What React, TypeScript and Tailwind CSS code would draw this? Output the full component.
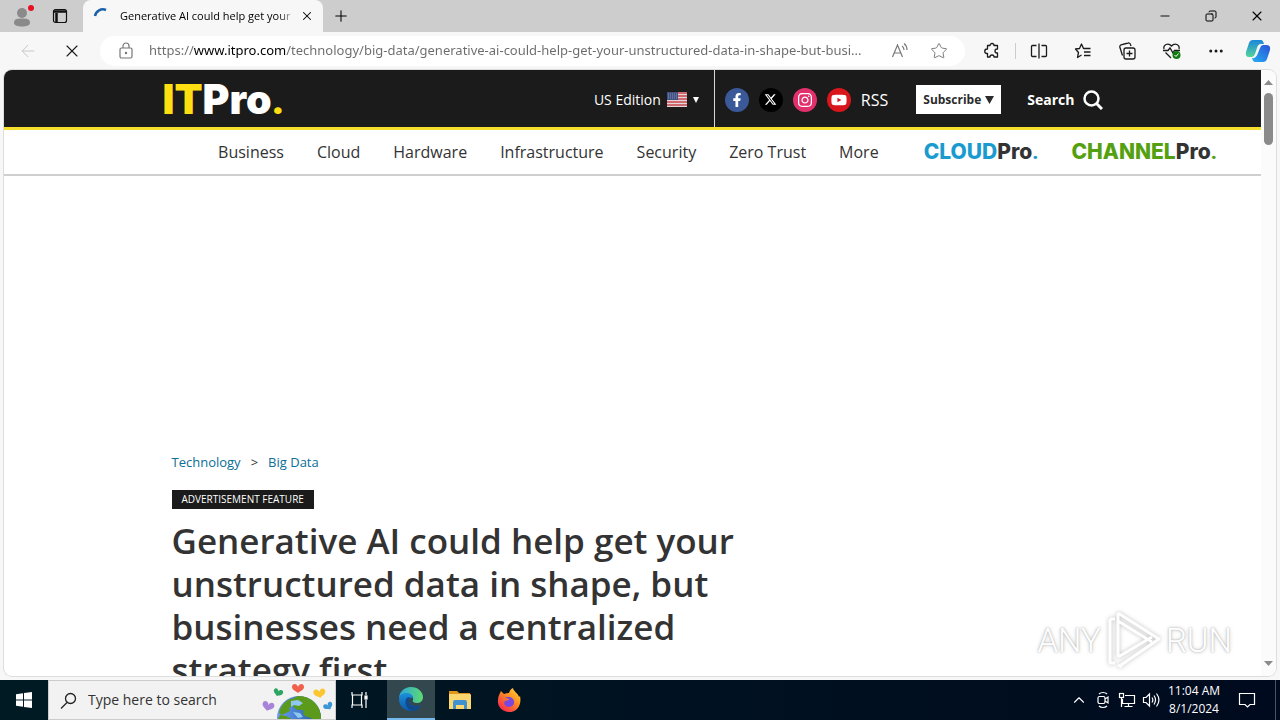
import React, { useState } from 'react';
import { X, Plus, Minus, Star, MoreHorizontal, ArrowLeft, Copy, ChevronUp } from 'lucide-react';
import { FaFacebookF, FaYoutube, FaInstagram } from 'react-icons/fa';
import { FaXTwitter } from 'react-icons/fa6';

const PAGE_URL =
  'https://www.itpro.com/technology/big-data/generative-ai-could-help-get-your-unstructured-data-in-shape-but-busi...';

const NAV_ITEMS = ['Business', 'Cloud', 'Hardware', 'Infrastructure', 'Security', 'Zero Trust', 'More'];

const SOCIALS = [
  { label: 'Facebook', className: 'bg-[#3b5998]', icon: <FaFacebookF size={14} /> },
  { label: 'X', className: 'bg-black', icon: <FaXTwitter size={13} /> },
  { label: 'Instagram', className: 'bg-[#e1306c]', icon: <FaInstagram size={16} /> },
  { label: 'YouTube', className: 'bg-[#d8161b]', icon: <FaYoutube size={16} /> },
];

function TabBar() {
  return (
    <div className="flex h-8 shrink-0 items-stretch bg-[#cdcdcd] text-black">
      <button aria-label="Profile" className="flex w-11 items-center justify-center">
        <svg width="24" height="24" viewBox="0 0 24 24">
          <circle cx="12" cy="9" r="5" fill="#8a8a8a" />
          <path d="M4 19c0-4 3-4.500 8-4.500s8 .5 8 4.500c0 2.500-4 3.500-8 3.500S4 21.500 4 19z" fill="#8a8a8a" />
          <circle cx="21" cy="4" r="3" fill="#e81123" />
        </svg>
      </button>
      <button aria-label="Tab actions" className="flex w-8 items-center justify-center">
        <svg width="16" height="16" viewBox="0 0 16 16" fill="none" stroke="#111" strokeWidth="1.200">
          <rect x="1.500" y="1.500" width="13" height="13" rx="2" />
          <path d="M2 3.500h12M4.500 5v9" strokeWidth="2.500" />
        </svg>
      </button>
      <div className="ml-[7px] flex w-60 items-center rounded-t-lg bg-[#f7f7f7] pr-[9px] pl-[9px]">
        <svg width="20" height="20" viewBox="0 0 20 20" fill="none" stroke="#1a62a8" strokeWidth="2.500">
          <path d="M3 10a8 8 0 0 1 11-6" />
        </svg>
        <span className="ml-2 flex-1 bg-linear-to-r from-black from-90% to-[#bbb] bg-clip-text text-[11px] whitespace-nowrap text-transparent">
          Generative AI could help get your
        </span>
        <button aria-label="Close tab" className="ml-2">
          <X size={14} strokeWidth={1.8} />
        </button>
      </div>
      <button aria-label="New tab" className="flex w-9 items-center justify-center">
        <Plus size={18} strokeWidth={1.4} />
      </button>
      <div className="ml-auto flex">
        <button aria-label="Minimize" className="flex w-[46px] items-center justify-center">
          <Minus size={14} strokeWidth={1.6} />
        </button>
        <button aria-label="Restore" className="flex w-[46px] items-center justify-center">
          <Copy size={12} strokeWidth={2} className="-scale-x-100" />
        </button>
        <button aria-label="Close" className="flex w-[46px] items-center justify-center">
          <X size={16} strokeWidth={1.6} />
        </button>
      </div>
    </div>
  );
}

function Toolbar() {
  const [url, setUrl] = useState(PAGE_URL);

  return (
    <div className="flex h-[38px] shrink-0 items-center bg-[#f7f7f7] text-[#1b1b1b]">
      <button aria-label="Back" className="ml-[18px] text-[#c8c8c8]">
        <ArrowLeft size={20} strokeWidth={1.2} />
      </button>
      <button aria-label="Stop" className="ml-6">
        <X size={20} strokeWidth={1.3} />
      </button>
      <div className="ml-[18px] flex h-[30px] min-w-0 flex-1 items-center rounded-full bg-white pr-[17px] pl-[18px] text-[#777]">
        <svg width="16" height="18" viewBox="0 0 16 18" fill="none" stroke="currentColor" strokeWidth="1.200">
          <rect x="2" y="6" width="12" height="10" rx="1.500" />
          <path d="M5 6V4a3 3 0 0 1 6 0v2" />
          <circle cx="8" cy="11" r=".6" fill="currentColor" />
        </svg>
        <input
          aria-label="Address and search bar"
          value={url}
          onChange={(e) => setUrl(e.target.value)}
          className="ml-[15px] min-w-0 flex-1 bg-[linear-gradient(90deg,#6b6b6b_45px,#000_45px,#000_137px,#6b6b6b_137px)] bg-clip-text font-['Noto_Sans'] text-[13px] text-transparent outline-none"
        />
        <button aria-label="Read aloud" className="ml-3">
          <svg width="18" height="18" viewBox="0 0 18 18" fill="none" stroke="currentColor" strokeWidth="1.200">
            <path d="M1.500 15L6.500 3l5 12M3.500 11h6M11 4c1.500 1 2 2.500 2 4M13 1.500c2 1.500 3 4 3 6.500" />
          </svg>
        </button>
        <button aria-label="Add to favorites" className="ml-[21px]">
          <Star size={18} strokeWidth={1.3} />
        </button>
      </div>
      <div className="ml-[18px] flex items-center">
        <button aria-label="Extensions">
          <svg width="18" height="18" viewBox="0 0 18 18" fill="none" stroke="currentColor" strokeWidth="1.300" strokeLinejoin="round">
            <path d="M4.500 3.500H7a2 2 0 0 1 4 0h3.500V7H14a2 2 0 0 0 0 4h.5v4H11a2 2 0 0 0-4 0H4.500v-3.500H4a2.200 2.200 0 0 1 0-4.500h.5z" />
          </svg>
        </button>
        <span className="ml-[14px] h-4 w-px bg-[#ccc]" />
        <button aria-label="Split screen" className="ml-[14px]">
          <svg width="18" height="18" viewBox="0 0 18 18" fill="none" stroke="currentColor" strokeWidth="1.300">
            <path d="M6.500 3.500h-4a1 1 0 0 0-1 1v9a1 1 0 0 0 1 1h4M11.500 3.500h4a1 1 0 0 1 1 1v9a1 1 0 0 1-1 1h-4M9 1.500v15" />
          </svg>
        </button>
        <button aria-label="Favorites" className="ml-[26px]">
          <svg width="18" height="18" viewBox="0 0 18 18" fill="none" stroke="currentColor" strokeWidth="1.300" strokeLinejoin="round">
            <path d="M16.500 6.500H9.500L7.500 2 5.500 6.500 1.500 7l3 3.500-1 5 4-2.500M10 10h6.500M10 13.500h6.500" />
          </svg>
        </button>
        <button aria-label="Collections" className="ml-[26px]">
          <svg width="18" height="18" viewBox="0 0 18 18" fill="none" stroke="currentColor" strokeWidth="1.300">
            <rect x="6" y="6" width="11" height="11" rx="2" />
            <path d="M11.500 8.500v6M8.500 11.500h6M4.500 13.500L1.800 5A2 2 0 0 1 3 2.800l7-1.800a2 2 0 0 1 2.500 1.500l.5 1.500" />
          </svg>
        </button>
        <button aria-label="Browser essentials" className="ml-[26px]">
          <svg width="20" height="18" viewBox="0 0 20 18" fill="none" stroke="currentColor" strokeWidth="1.300">
            <path d="M2 7C1 3 6 0 9.500 4 13 0 18 3 17 7M1 8.500h5L8 6l3 5 1.500-2.500H18M3.500 10.500L9 16" />
            <circle cx="14.500" cy="13" r="4" fill="#107c10" stroke="none" />
            <path d="M12.500 13l1.500 1.500 2.500-3" stroke="#fff" strokeWidth="1" />
          </svg>
        </button>
        <button aria-label="Settings and more" className="ml-[25px]">
          <MoreHorizontal size={18} strokeWidth={2} />
        </button>
        <button aria-label="Copilot" className="mr-[9px] ml-5">
          <svg width="26" height="24" viewBox="0 0 26 24">
            <defs>
              <linearGradient id="cp1" x1="0" y1="0" x2="0" y2="1">
                <stop offset="0" stopColor="#1b86dc" />
                <stop offset="1" stopColor="#54d49a" />
              </linearGradient>
              <linearGradient id="cp2" x1="1" y1="0" x2="0" y2="1">
                <stop offset="0" stopColor="#2a52d8" />
                <stop offset="1" stopColor="#24b0f0" />
              </linearGradient>
            </defs>
            <path d="M8 1h8q2 0 3 4h-3q-3 0-4 4l-2 6q-1 3-3 3H4q-4 0-3-5l3-9q1-3 4-3z" fill="url(#cp1)" />
            <path d="M18 6h3q5 0 4 5l-3 9q-1 3-4 3h-8q-2 0-3-4 4 1 6-5l2-5q1-3 3-3z" fill="url(#cp2)" />
          </svg>
        </button>
      </div>
    </div>
  );
}

function UsFlag() {
  return (
    <svg width="20" height="15" viewBox="0 0 20 15">
      <rect width="20" height="15" fill="#e8d4d6" />
      <path d="M0 1h20M0 4h20M0 7h20M0 10h20M0 13h20" stroke="#c2474f" strokeWidth="1.300" />
      <rect width="11" height="8" fill="#3f4f80" />
      <path d="M1 2h9M1 4h9M1 6h9" stroke="#9aa5c4" strokeWidth=".8" strokeDasharray="1 1" />
    </svg>
  );
}

function SiteHeader() {
  return (
    <header className="border-b-[3px] border-[#f6e02e] bg-[#1b1b1b] text-white">
      <div className="mx-auto flex h-[57px] max-w-[940px] items-center pt-[2px]">
        <a href="#" className="font-[Inter] text-[41px] leading-none font-black text-[#ffdf12]">
          IT<span className="text-white">Pro</span>
          <span className="font-[Roboto]">.</span>
        </a>
        <button className="ml-auto flex items-center gap-[6px] text-sm">
          US Edition <UsFlag />
          <svg width="6" height="6" viewBox="0 0 6 6" fill="currentColor">
            <path d="M0 0h6L3 6z" />
          </svg>
        </button>
        <span className="-mt-[2px] ml-[15px] w-px self-stretch bg-[#d8d8d8]" />
        <div className="ml-[10px] flex items-center gap-[10px]">
          {SOCIALS.map((s) => (
            <a
              key={s.label}
              href="#"
              aria-label={s.label}
              className={`flex size-6 items-center justify-center rounded-full ${s.className}`}
            >
              {s.icon}
            </a>
          ))}
          <a href="#" className="text-base">
            RSS
          </a>
        </div>
        <button className="ml-7 flex h-[29px] items-center gap-1 bg-white px-[7px] text-xs font-bold text-[#2b2b2b]">
          Subscribe
          <svg width="9" height="8" viewBox="0 0 9 8" fill="currentColor">
            <path d="M0 0h9L4.500 8z" />
          </svg>
        </button>
        <button className="ml-[26px] flex items-center gap-2 text-sm font-bold">
          Search
          <svg width="20" height="20" viewBox="0 0 20 20" fill="none" stroke="currentColor" strokeWidth="2.500">
            <circle cx="8.500" cy="8.500" r="7" />
            <path d="M13.500 13.500l5.500 5.500" strokeWidth="3" />
          </svg>
        </button>
      </div>
    </header>
  );
}

function SiteNav() {
  return (
    <nav className="flex h-[46px] items-center justify-center gap-[33px] border-b-2 border-[#cfcfcf] pl-[170px] text-base whitespace-nowrap text-[#333]">
      {NAV_ITEMS.map((item) => (
        <a key={item} href="#">
          {item}
        </a>
      ))}
      <a href="#" className="ml-3 font-[Inter] text-[21px] font-extrabold text-[#1a9bd0]">
        CLOUD<span className="text-[#333]">Pro</span>
        <span className="font-[Roboto]">.</span>
      </a>
      <a href="#" className="font-[Inter] text-[21px] font-extrabold text-[#55a010]">
        CHANNEL<span className="text-[#333]">Pro</span>
        <span className="font-[Roboto]">.</span>
      </a>
    </nav>
  );
}

function Article() {
  return (
    <main className="mx-auto max-w-[940px] px-[9px] pt-[276px]">
      <div className="flex gap-[10px] text-[13px] leading-5 text-[#0b6e95]">
        <a href="#">Technology</a>
        <span className="text-[#333]">&gt;</span>
        <a href="#">Big Data</a>
      </div>
      <div className="mt-[18px] flex">
        <span className="bg-[#1b1b1b] px-[10px] text-[10px] leading-[19px] text-white">ADVERTISEMENT FEATURE</span>
      </div>
      <h1 className="mt-[10px] max-w-[600px] text-[35px] leading-[43px] font-semibold text-[#333]">
        Generative AI could help get your unstructured data in shape, but businesses need a centralized strategy first
      </h1>
    </main>
  );
}

function Watermark() {
  return (
    <div className="absolute right-11 bottom-1 flex items-center gap-1 font-[Roboto] text-[33px] leading-none font-light text-white [text-shadow:0_0_2px_#aaa,0_0_4px_#ccc]">
      ANY
      <svg
        width="57"
        height="64"
        viewBox="0 0 57 64"
        fill="none"
        stroke="#fff"
        strokeWidth="3"
        strokeLinejoin="round"
        className="drop-shadow-[0_0_2px_#bbb]"
      >
        <path d="M13 5v44M13 5l41 26-38 26M13 13l34 21M13 49l34-20M5 11v44h5M5 11h5M13 57l4 2" />
      </svg>
      RUN
    </div>
  );
}

function Scrollbar() {
  return (
    <div className="flex w-[15px] shrink-0 flex-col items-center bg-[#fbfbfb] pt-[10px] pb-[10px]">
      <svg width="9" height="5" viewBox="0 0 9 5" fill="#8a8a8a">
        <path d="M0 5h9L4.500 0z" />
      </svg>
      <span className="mt-2 h-[52px] w-[9px] rounded-full bg-[#8a8a8a]" />
      <svg width="9" height="5" viewBox="0 0 9 5" fill="#8a8a8a" className="mt-auto">
        <path d="M0 0h9L4.500 5z" />
      </svg>
    </div>
  );
}

const HEART = 'M0 2C-1-2-6-2-6 2c0 3 4 4 6 6 2-2 6-3 6-6 0-4-5-4-6 0z';

function Globe() {
  return (
    <svg width="76" height="38" viewBox="-3 0 76 38" className="shrink-0">
      <defs>
        <linearGradient id="sea" x1="0" y1="0" x2="1" y2="0">
          <stop offset="0" stopColor="#6a9df8" />
          <stop offset="1" stopColor="#1d5a9c" />
        </linearGradient>
        <clipPath id="globe">
          <circle cx="37" cy="37" r="22" />
        </clipPath>
      </defs>
      <path d={HEART} transform="translate(36 4)" fill="#f0604d" />
      <path d={HEART} transform="translate(17 9) rotate(20) scale(.8)" fill="#2da562" />
      <path d={HEART} transform="translate(57 9) rotate(-10)" fill="#fbc62f" />
      <path d={HEART} transform="translate(7 22) rotate(15)" fill="#a884d8" />
      <path d={HEART} transform="translate(65 23) rotate(-30) scale(.8)" fill="#3a96d6" />
      <circle cx="37" cy="37" r="22" fill="url(#sea)" />
      <g clipPath="url(#globe)">
        <path
          d="M33 16c8-3 18 0 24 9l3 13H50c-3-3-8-1-9-6 3-3-3-4-6-3-3-3-5-3-3-7zM28 18l7-1-4 8-4 2 1 3-8 4-3-2c1-6 5-11 11-14zM18 34l6 1 6 3H16z"
          fill="#5c9a1c"
        />
        <path d="M29 20l7-1 5 3-4 3-5-1-3 2zM31 31l7 1 3 4-5 1z" fill="#8dc7f2" />
      </g>
    </svg>
  );
}

function EdgeLogo() {
  return (
    <svg width="26" height="26" viewBox="0 0 26 26">
      <defs>
        <linearGradient id="edgeTop" x1="0" y1="0" x2="1" y2="0">
          <stop offset="0" stopColor="#2ba5dd" />
          <stop offset="1" stopColor="#5ddb70" />
        </linearGradient>
        <linearGradient id="edgeBase" x1="0" y1="0" x2="0" y2="1">
          <stop offset="0" stopColor="#1b90dc" />
          <stop offset="1" stopColor="#0d58a6" />
        </linearGradient>
      </defs>
      <path d="M1 13C1 6 6 1 13 1c7 0 12 5 12 10 0 4-3 6-6 6s-5-1-4-3c1-4-3-6-6-6-4 0-8 2-8 5z" fill="url(#edgeTop)" />
      <path d="M1 13c0-4 4-6 7-6 4 0 7 2 7 5-2-1-4 0-4 3 0 4 5 7 12 4-2 4-6 6-10 6C6 25 1 20 1 13z" fill="url(#edgeBase)" />
      <path d="M8 13c-2 5 1 11 7 12 3 0 6-2 8-6-7 3-12 0-12-4 0-2 1-3 2-3-2-1-4-1-5 1z" fill="#114a8b" />
    </svg>
  );
}

function ExplorerLogo() {
  return (
    <svg width="22" height="20" viewBox="0 0 22 20">
      <path d="M0 1h8l2 2h11v4H0z" fill="#e0961c" />
      <path d="M0 4h21a1 1 0 0 1 1 1v14H0z" fill="#fcd770" />
      <path d="M4 19v-7a2 2 0 0 1 2-2h10a2 2 0 0 1 2 2v7h-3v-4H7v4z" fill="#3f92cf" />
    </svg>
  );
}

function FirefoxLogo() {
  return (
    <svg width="24" height="24" viewBox="0 0 24 24">
      <defs>
        <linearGradient id="fox" x1="1" y1="0" x2="0.2" y2="1">
          <stop offset="0" stopColor="#ffe13c" />
          <stop offset="0.45" stopColor="#ff9022" />
          <stop offset="1" stopColor="#f5224f" />
        </linearGradient>
      </defs>
      <path
        d="M3 5l1-2 3 3c2-1 4-1 5-1 1-3 2-4 4-5 0 3 5 5 6 9l1-1c2 9-3 16-11 16C5 24 0 18 1 12c0-3 1-5 2-7z"
        fill="url(#fox)"
      />
      <path d="M7 9c3 1 5-1 8 1 4 3 2 9-3 9-4 0-6-4-4-6l4-1c1-1-3-2-5-3z" fill="#7a46e0" />
    </svg>
  );
}

function Taskbar() {
  return (
    <footer className="flex h-10 shrink-0 items-stretch bg-linear-to-r from-[#001a24] to-[#000a1e] text-white">
      <button aria-label="Start" className="flex w-12 items-center justify-center">
        <svg width="16" height="16" viewBox="0 0 16 16" fill="#fff">
          <path d="M0 2.200l7-1v6.300H0zM8 1l8-1v7.500H8zM0 8.500h7v6.300l-7-1zM8 8.500h8V16l-8-1z" />
        </svg>
      </button>
      <label className="flex w-72 items-center border border-[#ccc] bg-[#f2f2f2] pl-[11px]">
        <svg width="17" height="17" viewBox="0 0 17 17" fill="none" stroke="#222" strokeWidth="1.300">
          <circle cx="10.500" cy="6.500" r="5" />
          <path d="M7 10.500L1 16.500" />
        </svg>
        <input
          aria-label="Search"
          placeholder="Type here to search"
          className="ml-[11px] min-w-0 flex-1 text-sm outline-none placeholder:text-[#333]"
        />
        <Globe />
      </label>
      <button aria-label="Task view" className="flex w-12 items-center justify-center">
        <svg width="18" height="18" viewBox="0 0 18 18" fill="none" stroke="#fff" strokeWidth="1.200">
          <path d="M1 1v3h10V1M1 17v-3h10v3M1.500 4v10M10.500 4v10M15 1v3M15 9v8" />
          <rect x="14" y="5" width="2" height="3" fill="#fff" />
        </svg>
      </button>
      <button
        aria-label="Microsoft Edge"
        className="ml-[3px] flex w-12 items-center justify-center border-b-2 border-[#76b9ed] bg-[#33474f]"
      >
        <EdgeLogo />
      </button>
      <button aria-label="File Explorer" className="ml-px flex w-12 items-center justify-center">
        <ExplorerLogo />
      </button>
      <button aria-label="Firefox" className="ml-px flex w-12 items-center justify-center">
        <FirefoxLogo />
      </button>
      <div className="ml-auto flex items-center">
        <button aria-label="Show hidden icons" className="flex w-6 justify-center">
          <ChevronUp size={18} strokeWidth={1.5} />
        </button>
        <button aria-label="Meet now" className="flex w-6 justify-center">
          <svg width="14" height="18" viewBox="0 0 14 18" fill="none" stroke="#fff" strokeWidth="1.200">
            <rect x="2" y="5.500" width="7" height="7" rx="1.500" />
            <path d="M9 8l3-2v6l-3-2M3 3c2-2 6-2 8 0M3 15c2 2 6 2 8 0" />
          </svg>
        </button>
        <button aria-label="Network" className="flex w-6 justify-center">
          <svg width="18" height="16" viewBox="0 0 18 16" fill="none" stroke="#fff" strokeWidth="1.200">
            <path d="M7 3.500h9.500v8h-12V7M10.500 11.500v3M6.500 14.500h8M3.500 6v9" />
            <rect x="1.500" y="1.500" width="4" height="4" />
          </svg>
        </button>
        <button aria-label="Volume" className="flex w-6 justify-center">
          <svg width="18" height="16" viewBox="0 0 18 16" fill="none" stroke="#fff" strokeWidth="1.200">
            <path d="M1.500 5.500h2.500L7.500 2v12L4 10.500H1.500zM10 5.500c1 1.500 1 3.500 0 5M12 3.500c2 3 2 6 0 9M14.500 1.500c3 4 3 9 0 13" />
          </svg>
        </button>
        <div className="w-[62px] text-center text-xs leading-[18px]">
          <div>11:04 AM</div>
          <div>8/1/2024</div>
        </div>
        <button aria-label="Notifications" className="ml-1 flex w-9 justify-center">
          <svg width="18" height="17" viewBox="0 0 18 17" fill="none" stroke="#fff" strokeWidth="1.200">
            <path d="M1.500 1.500h15v11H12L9.500 15 7 12.500H1.500z" />
          </svg>
        </button>
        <span className="mr-1 ml-[10px] h-10 w-px bg-[#4a5264]" />
      </div>
    </footer>
  );
}

export default function App() {
  return (
    <div className="flex h-screen flex-col overflow-hidden bg-[#f7f7f7] font-['Open_Sans','Noto_Sans',sans-serif]">
      <TabBar />
      <Toolbar />
      <div className="relative mx-1 mb-1 flex min-h-0 flex-1 overflow-hidden rounded-lg bg-white shadow-[0_0_0_1px_#ddd]">
        <div className="min-w-0 flex-1 overflow-hidden">
          <SiteHeader />
          <SiteNav />
          <Article />
        </div>
        <Scrollbar />
        <Watermark />
      </div>
      <Taskbar />
    </div>
  );
}
